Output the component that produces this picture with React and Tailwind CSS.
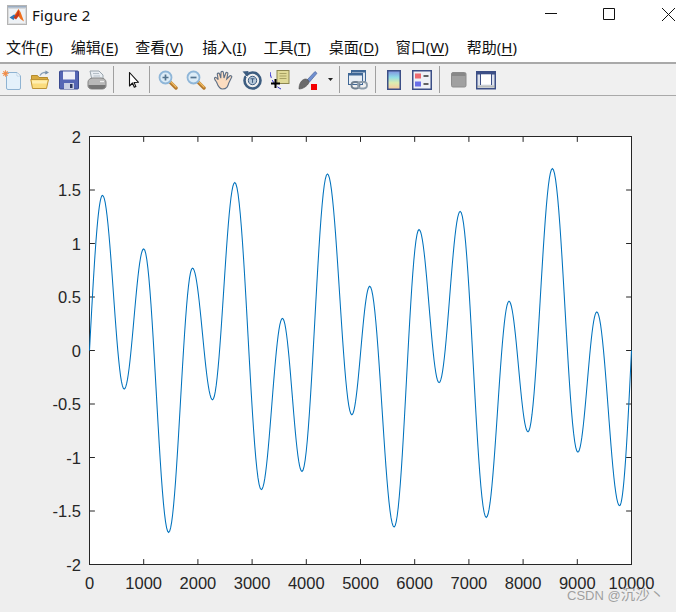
import React from "react";

const EXT = [
  [0, 0], [240, 1.45], [640, -0.36], [1000, 0.95], [1460, -1.7], [1900, 0.77], [2270, -0.46],
  [2680, 1.57], [3170, -1.3], [3560, 0.3], [3920, -1.13], [4390, 1.65], [4840, -0.6], [5170, 0.6],
  [5620, -1.65], [6080, 1.13], [6450, -0.3], [6840, 1.3], [7320, -1.56], [7740, 0.46], [8090, -0.76],
  [8540, 1.7], [9010, -0.95], [9360, 0.36], [9780, -1.45], [10000, 0],
];
const L = 89.5, R = 631.5, T = 136.5, B = 564.5;
const px = (x) => L + (x / 10000) * (R - L);
const py = (y) => T + ((2 - y) / 4) * (B - T);

function curve() {
  const pts = [];
  for (let i = 0; i < EXT.length - 1; i++) {
    const [x0, y0] = EXT[i];
    const [x1, y1] = EXT[i + 1];
    for (let s = 0; s < 24; s++) {
      const f = s / 24;
      let e;
      if (i === 0) e = Math.sin((f * Math.PI) / 2);
      else if (i === EXT.length - 2) e = 1 - Math.cos((f * Math.PI) / 2);
      else e = (1 - Math.cos(f * Math.PI)) / 2;
      pts.push(`${px(x0 + (x1 - x0) * f).toFixed(2)},${py(y0 + (y1 - y0) * e).toFixed(2)}`);
    }
  }
  pts.push(`${px(10000)},${py(0)}`);
  return "M" + pts.join("L");
}

const XT = [0, 1000, 2000, 3000, 4000, 5000, 6000, 7000, 8000, 9000, 10000];
const YT = [2, 1.5, 1, 0.5, 0, -0.5, -1, -1.5, -2];

function Plot() {
  const ticks = [];
  XT.slice(1, -1).forEach((x) => {
    ticks.push(`M${px(x)} ${T}v5.4M${px(x)} ${B}v-5.4`);
  });
  YT.slice(1, -1).forEach((y) => {
    ticks.push(`M${L} ${py(y)}h5.4M${R} ${py(y)}h-5.4`);
  });
  return (
    <svg viewBox="0 96 676 516" className="block w-[676px] h-[516px]">
      <rect x={L} y={T} width={R - L} height={B - T} fill="#fff" stroke="#262626" strokeWidth="1" />
      <path d={ticks.join("")} stroke="#262626" strokeWidth="1" fill="none" />
      <path d={curve()} stroke="#0072BD" strokeWidth="1.05" fill="none" />
      <g fill="#262626" fontFamily="'Liberation Sans', Arial, sans-serif" fontSize="16.5">
        {XT.map((x) => (
          <text key={x} x={px(x)} y="589" textAnchor="middle">{x}</text>
        ))}
        {YT.map((y) => (
          <text key={y} x="81" y={py(y) + 6} textAnchor="end">{y}</text>
        ))}
      </g>
    </svg>
  );
}

const Logo = () => (
  <svg width="20" height="20" viewBox="0 0 20 20" className="ml-[7px] shrink-0">
    <defs>
      <linearGradient id="lf" x1="0" y1="0" x2="0" y2="1">
        <stop offset="0" stopColor="#8fa3bb" />
        <stop offset="1" stopColor="#cfd5dc" />
      </linearGradient>
    </defs>
    <rect x="0.5" y="0.5" width="19" height="19" fill="#dcdcdc" stroke="#b4b4b4" />
    <rect x="1" y="1" width="18" height="2.5" fill="url(#lf)" />
    <rect x="2" y="4" width="16" height="14" fill="#eef2f6" />
    <path d="M2.5 12.5L7 9.500l2.500 1L6.500 15z" fill="#2f78b8" />
    <path d="M7.500 10L11.500 4l2 3 L17 16.500l-3.500-2.500L10.500 10z" fill="#ee6f1e" />
    <path d="M9.500 9L11.500 4.500L12.500 10 9 14.500 6.500 12.500z" fill="#c9381a" />
  </svg>
);

const Menu = ({ zh, k, cls }) => (
  <span className={`whitespace-nowrap ${cls}`}>
    {zh}(<span className="underline underline-offset-2">{k}</span>)
  </span>
);

const Sep = ({ cls }) => <div className={`w-px h-[27px] bg-[#a0a0a0] shrink-0 ${cls}`} />;

const Ic = ({ cls, children }) => (
  <svg width="20" height="20" viewBox="0 0 20 20" className={`shrink-0 ${cls}`}>{children}</svg>
);

const Glass = ({ sign }) => (
  <>
    <path d="M11.5 11.5L18 18" stroke="#b5782a" strokeWidth="3.4" strokeLinecap="round" />
    <path d="M12 11L18 17" stroke="#f0bd66" strokeWidth="1.2" strokeLinecap="round" />
    <circle cx="7.5" cy="7.5" r="6" fill="#dcecf7" stroke="#8fb6d8" strokeWidth="1.8" />
    <path d={sign === "+" ? "M4.5 7.5h6M7.5 4.5v6" : "M4.5 7.5h6"} stroke="#54748f" strokeWidth="1.7" />
  </>
);

function Toolbar() {
  return (
    <div className="flex items-center h-[31px] border-t-2 border-b border-[#a9a9a9] bg-[#f0f0f0] box-content">
      <Ic cls="ml-[2px]">
        <path d="M4.500 2.500H15l3.500 3.500V18a1.500 1.500 0 0 1-1.500 1.500H6A1.500 1.500 0 0 1 4.500 18z" fill="#e4f1fb" stroke="#8fb3d2" />
        <path d="M15 2.500V6h3.500z" fill="#fff" stroke="#a4c2dc" strokeWidth=".6" />
        <circle cx="3.500" cy="3.500" r="2.200" fill="#f5a15a" />
        <path d="M3.500 0v7M0 3.500h7M1 1l5 5M6 1L1 6" stroke="#ef8a4a" strokeWidth=".7" />
      </Ic>
      <Ic cls="ml-[8px]">
        <path d="M1.500 5.500h6l1.500 2h8.500v4h-16z" fill="#d9ab3f" stroke="#b58b2d" />
        <path d="M0.800 9.500h17.700l-2 9H2.500z" fill="#fbdc7d" stroke="#bd9336" />
        <path d="M1.800 10.500h15.500l-.6 3H2.300z" fill="#ffeeb0" />
        <path d="M10 5.500c2-3.500 5-3.500 7-2" stroke="#8aa0b8" strokeWidth="1.400" fill="none" />
        <path d="M15.500 0.500l3.500 2-3.800 2z" fill="#7a93ad" />
      </Ic>
      <Ic cls="ml-[9px]">
        <rect x="0.500" y="1" width="19" height="18" rx="1" fill="#5566b4" stroke="#3a4a90" />
        <rect x="4" y="1.500" width="12" height="8" fill="#eef0f8" />
        <rect x="5" y="13" width="10" height="6" fill="#c9cfe3" />
        <rect x="11" y="14" width="2.500" height="4" fill="#2c3760" />
      </Ic>
      <Ic cls="ml-[8px]">
        <path d="M3 1h9l4 4v5H5z" fill="#e8edf2" stroke="#9aa5ad" />
        <path d="M6 3.500h6M6.500 6h6.500" stroke="#b5bfc7" />
        <path d="M1 12c0-2 2-4 5-4h8c3 0 5 2 5 4v4c0 2-2 3-4 3H5c-2 0-4-1-4-3z" fill="#b8b8b8" stroke="#858585" />
        <path d="M1.500 15h17v1c0 2-2 3-3.500 3H5c-1.500 0-3.500-1-3.500-3z" fill="#757575" />
        <path d="M13 11.500h4" stroke="#efefef" strokeWidth="1.300" />
      </Ic>
      <Sep cls="ml-[6px]" />
      <Ic cls="ml-[10px]">
        <path d="M5.500 2.500V16l3-3 1.800 4.300 1.600-.7-1.800-4.100 4.400-.2z" fill="#fff" stroke="#111" strokeWidth="1.100" strokeLinejoin="round" />
      </Ic>
      <Sep cls="ml-[5px]" />
      <Ic cls="ml-[8px]"><Glass sign="+" /></Ic>
      <Ic cls="ml-[8px]"><Glass sign="-" /></Ic>
      <Ic cls="ml-[8px]">
        <path d="M2.500 12C1 10-.3 8.500.8 7.600c1-.8 2.500.8 3.400 2.100L3.300 4.500c-.3-1.500 1.900-2 2.300-.5l1.200 4.200L7 2.500c0-1.500 2.300-1.500 2.400 0l.6 5.500 1.700-4.800c.5-1.400 2.500-.8 2.100.6L12.700 9l3-3c1-1 2.700.2 1.800 1.500L14.800 13c-1 3.500-2 6-6.300 6-3.500 0-4.700-3.500-6-7z" fill="#fbdcc0" stroke="#5e6f85" strokeWidth="1.100" />
      </Ic>
      <Ic cls="ml-[8px]">
        <circle cx="10.500" cy="10.500" r="8" fill="none" stroke="#3d5d80" strokeWidth="2.600" />
        <circle cx="10.500" cy="10.500" r="4.200" fill="#b4c6d8" stroke="#3d5d80" strokeWidth="1" />
        <path d="M8.500 8.800h4M10.500 8.800v4" stroke="#3d5d80" strokeWidth="1" />
        <path d="M0.500 1.500L6.500 1 5 6.500z" fill="#3d5d80" />
        <path d="M3.500 5.500L6 8" stroke="#f0f0f0" strokeWidth="1" />
      </Ic>
      <Ic cls="ml-[8px]">
        <rect x="7" y="0.500" width="12" height="13" fill="#e0da98" stroke="#8c8650" />
        <path d="M9.500 3.500h7M9.500 6h7M9.500 8.500h7" stroke="#a8a264" />
        <path d="M0 2c.5 6 4 14 11 17" stroke="#2d2dcf" strokeWidth="1" fill="none" strokeDasharray="6 2.500" />
        <path d="M5.500 9v9M1 13.500h9" stroke="#000" strokeWidth="2" />
      </Ic>
      <Ic cls="ml-[8px]">
        <path d="M9 10L17 1.500l2 1.800-7.500 8.700z" fill="#6f8fd0" stroke="#4a649c" strokeWidth=".7" />
        <path d="M1 19c0-5 2-9 6-10 2-.3 4 1.500 4 3.500C9.500 16 5 19 1 19z" fill="#6b6b6b" stroke="#4a4a4a" strokeWidth=".6" />
        <rect x="13" y="14" width="6" height="6" fill="#f40000" />
      </Ic>
      <svg width="5" height="3" viewBox="0 0 5 3" className="ml-[10px] shrink-0"><path d="M0 0h5L2.500 3z" fill="#222" /></svg>
      <Sep cls="ml-[6px]" />
      <Ic cls="ml-[8px]">
        <rect x="3.500" y="0.500" width="14" height="11" fill="#dfe7f0" stroke="#3f6796" />
        <rect x="3.500" y="0.500" width="14" height="2" fill="#3f6796" />
        <rect x="0.500" y="3.500" width="14" height="11" fill="#e9eef4" stroke="#3f6796" />
        <rect x="0.500" y="3.500" width="14" height="2" fill="#3f6796" />
        <rect x="3.500" y="12" width="8" height="6.500" rx="3.200" fill="none" stroke="#6f7f8f" strokeWidth="1.800" />
        <rect x="10" y="12" width="9" height="6.500" rx="3.200" fill="none" stroke="#8d9caa" strokeWidth="1.800" />
      </Ic>
      <Sep cls="ml-[7px]" />
      <svg width="14" height="20" viewBox="0 0 14 20" className="ml-[11px] shrink-0">
        <defs>
          <linearGradient id="cb" x1="0" y1="0" x2="0" y2="1">
            <stop offset="0" stopColor="#7f8fe0" />
            <stop offset=".35" stopColor="#8fdce6" />
            <stop offset=".65" stopColor="#dcedb0" />
            <stop offset="1" stopColor="#f8c8a0" />
          </linearGradient>
        </defs>
        <rect x="0.750" y="0.750" width="12.500" height="18.500" fill="url(#cb)" stroke="#3c4f86" strokeWidth="1.500" />
      </svg>
      <Ic cls="ml-[11px]">
        <rect x="0.750" y="0.750" width="18.500" height="18.500" fill="#eef1f7" stroke="#3c4f86" strokeWidth="1.500" />
        <rect x="3" y="3.500" width="6" height="5" fill="#ee6a6f" />
        <rect x="3" y="11.500" width="6" height="5" fill="#6a6fe8" />
        <path d="M11.500 6h5M11.500 14h5" stroke="#333" strokeWidth="1.500" />
      </Ic>
      <Sep cls="ml-[7px]" />
      <svg width="16" height="16" viewBox="0 0 16 16" className="ml-[11px] shrink-0">
        <rect x="0.500" y="0.500" width="14.500" height="14.500" rx="1.500" fill="#a0a0a0" stroke="#8c8c8c" />
        <rect x="1" y="1" width="13.500" height="3" fill="#888" />
      </svg>
      <Ic cls="ml-[9px]">
        <rect x="0.750" y="1.750" width="18.500" height="17" fill="#dde2ec" stroke="#3c4f86" strokeWidth="1.500" />
        <rect x="1" y="2" width="18" height="2.500" fill="#3c4f86" />
        <rect x="5" y="4.500" width="10" height="10" fill="#fff" />
        <path d="M4.500 4v11M15.500 4v11" stroke="#3c4f86" />
        <path d="M1.500 16.500h17" stroke="#9a9a8a" strokeWidth="2" strokeDasharray="1 1" />
      </Ic>
    </div>
  );
}

export default function App() {
  return (
    <div className="relative w-[676px] h-[612px] bg-white overflow-hidden font-['Noto_Sans','Noto_Sans_CJK_SC',sans-serif] text-[#111]">
      <div className="flex items-center h-[30px]">
        <Logo />
        <span className="ml-[5px] text-[15px] tracking-[0.2px]">Figure 2</span>
        <svg width="132" height="16" viewBox="0 0 132 16" className="ml-auto shrink-0">
          <path d="M1 6.500h12M59.500 1.500h11v11h-11zM118 1l13 13M131 1l-13 13" stroke="#111" strokeWidth="1" fill="none" />
        </svg>
      </div>
      <div className="flex items-center h-[32px] text-[15px] leading-none pt-[2px]">
        <Menu zh="文件" k="F" cls="ml-[6px]" />
        <Menu zh="编辑" k="E" cls="ml-[18px]" />
        <Menu zh="查看" k="V" cls="ml-[17px]" />
        <Menu zh="插入" k="I" cls="ml-[19px]" />
        <Menu zh="工具" k="T" cls="ml-[17px]" />
        <Menu zh="桌面" k="D" cls="ml-[18px]" />
        <Menu zh="窗口" k="W" cls="ml-[17px]" />
        <Menu zh="帮助" k="H" cls="ml-[18px]" />
      </div>
      <Toolbar />
      <div className="bg-[#eeeeee] h-[516px]">
        <Plot />
      </div>
      <div className="absolute left-[567px] top-[585px] leading-[20px] whitespace-nowrap text-[#8a8a8a]/80 font-['Liberation_Sans','Noto_Sans_CJK_SC',sans-serif]">
        <span className="text-[13px]">CSDN @</span>
        <span className="text-[14.5px]">沉沙丶</span>
      </div>
    </div>
  );
}
